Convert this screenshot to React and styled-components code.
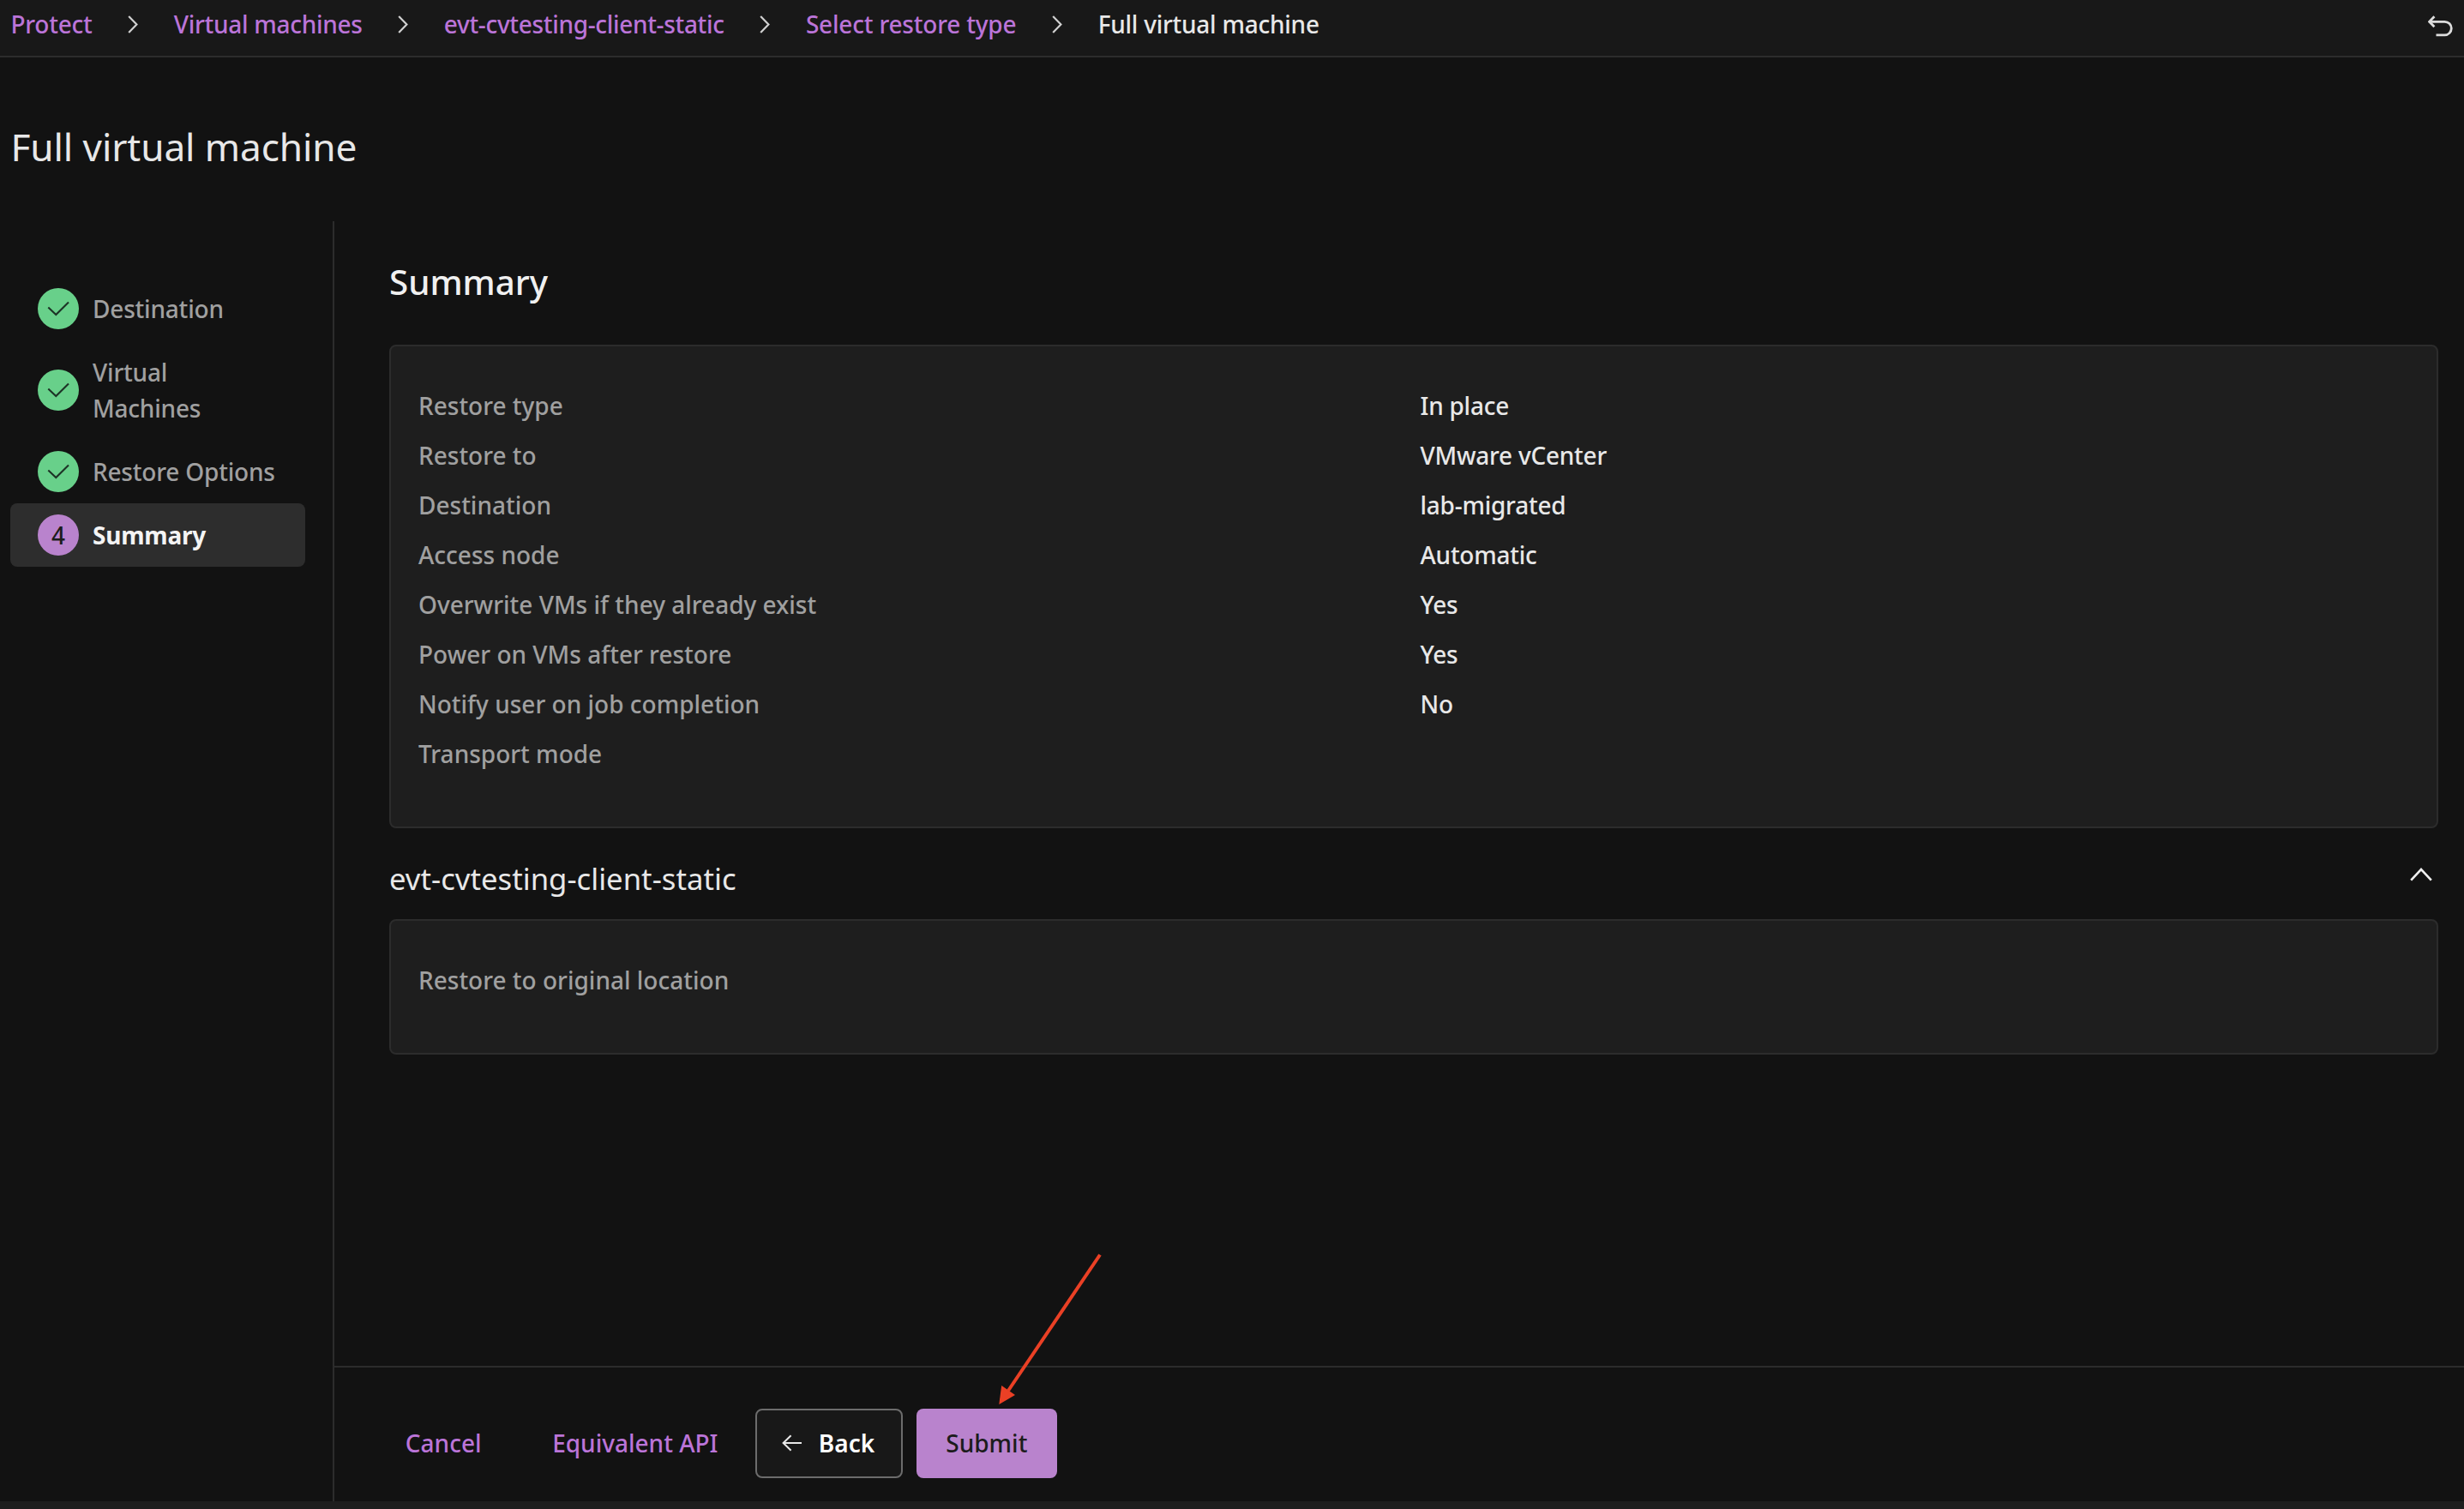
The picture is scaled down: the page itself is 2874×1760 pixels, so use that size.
import React from 'react'
import styled, { createGlobalStyle } from 'styled-components';

const crumbs = [
  { label: 'Protect', tracking: -0.25 },
  { label: 'Virtual machines', tracking: -0.29 },
  { label: 'evt-cvtesting-client-static', tracking: -0.33 },
  { label: 'Select restore type', tracking: -0.2 },
]

const steps = [
  { label: 'Destination', done: true },
  { label: 'Virtual Machines', done: true },
  { label: 'Restore Options', done: true },
  { label: 'Summary', active: true },
]

const details = [
  ['Restore type', 'In place'],
  ['Restore to', 'VMware vCenter'],
  ['Destination', 'lab-migrated'],
  ['Access node', 'Automatic'],
  ['Overwrite VMs if they already exist', 'Yes'],
  ['Power on VMs after restore', 'Yes'],
  ['Notify user on job completion', 'No'],
  ['Transport mode', ''],
]

function ChevronRight() {
  return (
    <CrumbChevron viewBox='0 0 12 21'>
      <path d='M1.2 1 L10.4 10.5 L1.2 20' />
    </CrumbChevron>
  )
}

function Header() {
  return (
    <TopBar>
      <Breadcrumb>
        {crumbs.map(crumb => (
          <React.Fragment key={crumb.label}>
            <Crumb href='/#' $tracking={crumb.tracking}>{crumb.label}</Crumb>
            <ChevronRight />
          </React.Fragment>
        ))}
        <CurrentCrumb>Full virtual machine</CurrentCrumb>
      </Breadcrumb>
      <UndoIcon viewBox='0 0 30 26'>
        <path d='M2 7.3 H19.5 A7.7 7.7 0 0 1 19.5 22.9 H9.5' />
        <path d='M7.4 1.2 L1.6 7.3 L7.4 13.2' />
      </UndoIcon>
    </TopBar>
  )
}

function Steps() {
  return (
    <Sidebar>
      {steps.map((step, index) => (
        <Step key={step.label} $active={step.active}>
          <StepBadge $active={step.active}>
            {step.done ? (
              <CheckIcon viewBox='0 0 48 48'>
                <path d='M12.3 22.6 L21.3 31 L36 16.6' />
              </CheckIcon>
            ) : index + 1}
          </StepBadge>
          <StepLabel $active={step.active}>{step.label}</StepLabel>
        </Step>
      ))}
    </Sidebar>
  )
}

function Footer() {
  return (
    <Actions>
      <LinkButton>Cancel</LinkButton>
      <LinkButton>Equivalent API</LinkButton>
      <BackButton>
        <BackIcon viewBox='0 0 24 20'>
          <path d='M1.6 10 H23 M10.6 1.2 L1.6 10 L10.6 18.8' />
        </BackIcon>
        Back
      </BackButton>
      <SubmitButton>Submit</SubmitButton>
    </Actions>
  )
}

function App() {
  return (
    <Page>
      <GlobalStyle />
      <Header />
      <PageTitle>Full virtual machine</PageTitle>
      <Body>
        <Steps />
        <Main>
          <Content>
            <SummaryTitle>Summary</SummaryTitle>
            <Card>
              {details.map(([label, value]) => (
                <Row key={label}>
                  <Label>{label}</Label>
                  <Value>{value}</Value>
                </Row>
              ))}
            </Card>
            <SectionHeader>
              <SectionTitle>evt-cvtesting-client-static</SectionTitle>
              <CollapseIcon viewBox='0 0 26 16'>
                <path d='M1.2 14.6 L13 2 L24.8 14.6' />
              </CollapseIcon>
            </SectionHeader>
            <Card>
              <Row>
                <Label>Restore to original location</Label>
              </Row>
            </Card>
          </Content>
          <Footer />
        </Main>
      </Body>
      <BottomStrip />
      <Pointer viewBox='0 0 130 180'>
        <line x1='123' y1='3.5' x2='16' y2='162' />
        <polygon points='5.3,178 8.2,156 24,167' />
      </Pointer>
    </Page>
  )
}

export default App;

const GlobalStyle = createGlobalStyle`
  * {
    box-sizing: border-box;
  }

  body {
    margin: 0;
    background: #121212;
    font-family: 'Noto Sans', sans-serif;
    font-size: 28px;
    font-weight: 500;
    color: #e8e8e8;
  }

  h1, h2, h3 {
    margin: 0;
  }

  button {
    font: inherit;
    border: 0;
    background: none;
    cursor: pointer;
  }

  svg {
    flex: none;
    fill: none;
  }
`

const Page = styled.div`
  position: relative;
  display: flex;
  flex-direction: column;
  height: 1760px;
  overflow: hidden;
`

const TopBar = styled.header`
  display: flex;
  justify-content: space-between;
  height: 67px;
  padding: 0 12px 0 12.5px;
  background: #181818;
  border-bottom: 2px solid #2c2c2c;
`

const Breadcrumb = styled.nav`
  display: flex;
  align-items: center;
  height: 56px;
  line-height: 56px;
`

const Crumb = styled.a`
  color: #bb74d8;
  text-decoration: none;
  white-space: nowrap;
  letter-spacing: ${props => props.$tracking}px;
`

const CrumbChevron = styled.svg`
  width: 12px;
  height: 21px;
  margin: 1px 41.8px 0 41.5px;
  stroke: #d0d0d0;
  stroke-width: 2.2;
`

const CurrentCrumb = styled.span`
  letter-spacing: -0.25px;
`

const UndoIcon = styled.svg`
  width: 30px;
  height: 26px;
  margin-top: 18px;
  stroke: #dcdcdc;
  stroke-width: 2.8;
`

const PageTitle = styled.h1`
  height: 191px;
  padding: 74px 0 0 12.5px;
  font-size: 44.2px;
  font-weight: 400;
  line-height: 60px;
  letter-spacing: -0.1px;
`

const Body = styled.div`
  display: flex;
  flex: 1;
  min-height: 0;
`

const Sidebar = styled.aside`
  width: 390px;
  padding: 65px 32px 0 12px;
  border-right: 2px solid #2c2c2c;
`

const Step = styled.div`
  display: flex;
  align-items: center;
  padding: 16px 30px 16px 32px;
  border-radius: 8px;
  background: ${props => props.$active ? '#2d2d2d' : 'transparent'};
`

const StepBadge = styled.span`
  display: flex;
  flex: none;
  align-items: center;
  justify-content: center;
  width: 48px;
  height: 48px;
  margin: -3px 0;
  border-radius: 50%;
  background: ${props => props.$active ? '#b983cd' : '#68d08a'};
  color: #1c1c1c;
`

const CheckIcon = styled.svg`
  width: 48px;
  height: 48px;
  stroke: #1d3326;
  stroke-width: 2.1;
`

const StepLabel = styled.span`
  padding-left: 16px;
  line-height: 42px;
  letter-spacing: -0.2px;
  color: ${props => props.$active ? '#f4f4f4' : '#a0a0a0'};
  font-weight: ${props => props.$active ? 700 : 500};
`

const Main = styled.main`
  display: flex;
  flex: 1;
  flex-direction: column;
`

const Content = styled.section`
  flex: 1;
  padding: 44px 30px 0 64px;
`

const SummaryTitle = styled.h2`
  margin-bottom: 46px;
  font-size: 40.3px;
  font-weight: 500;
  line-height: 54px;
  color: #f0f0f0;
`

const Card = styled.div`
  padding: 40px 30px 56px 32px;
  border: 2px solid #2c2c2c;
  border-radius: 8px;
  background: #1e1e1e;
`

const Row = styled.div`
  display: grid;
  grid-template-columns: 1168.5px 1fr;
  height: 58px;
  line-height: 59px;
`

const Label = styled.span`
  color: #a0a0a0;
`

const Value = styled.span`
  letter-spacing: -0.25px;
`

const SectionHeader = styled.div`
  display: flex;
  justify-content: space-between;
  height: 106px;
  padding: 33px 7px 0 0;
`

const SectionTitle = styled.h3`
  font-size: 34.7px;
  font-weight: 400;
  line-height: 52px;
`

const CollapseIcon = styled.svg`
  width: 26px;
  height: 16px;
  margin-top: 13px;
  stroke: #f0f0f0;
  stroke-width: 2.6;
`

const Actions = styled.footer`
  display: flex;
  align-items: flex-start;
  height: 158px;
  padding: 48px 0 0 41.5px;
  border-top: 2px solid #2c2c2c;
`

const LinkButton = styled.button`
  height: 81px;
  padding: 0 41.3px 2px;
  color: #bb74d8;
`

const BackButton = styled.button`
  display: flex;
  align-items: center;
  gap: 19px;
  width: 172px;
  height: 81px;
  margin-left: 2px;
  padding: 0 0 2px 29px;
  && {
    border: 2px solid #6c6c6c;
    background: #181818;
    font-weight: 600;
  }
  border-radius: 8px;
  color: #fff;
`

const BackIcon = styled.svg`
  width: 24px;
  height: 20px;
  stroke: #e8e8e8;
  stroke-width: 2;
`

const SubmitButton = styled.button`
  width: 164px;
  height: 81px;
  margin-left: 16px;
  padding: 0 0 2px;
  border-radius: 8px;
  && {
    background: #b983cd;
  }
  color: #1c1c1c;
`

const BottomStrip = styled.div`
  height: 9px;
  background: #1e1e1e;
`

/* Callout arrow that points at the submit button */
const Pointer = styled.svg`
  position: absolute;
  left: 1160px;
  top: 1460px;
  width: 130px;
  height: 180px;
  fill: #ea4025;

  line {
    stroke: #ea4025;
    stroke-width: 4;
  }
`
